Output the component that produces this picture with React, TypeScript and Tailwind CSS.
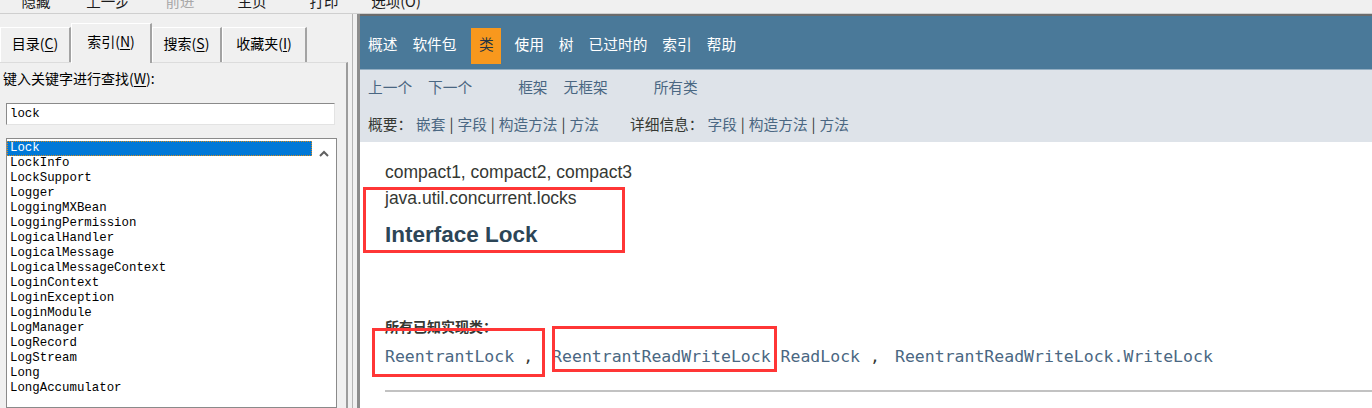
import React from 'react'

const toolbar = [
  { label: '隐藏', dim: false },
  { label: '上一步', dim: false },
  { label: '前进', dim: true },
  { label: '主页', dim: false },
  { label: '打印', dim: false },
  { label: '选项(O)', dim: false },
]

const entries = [
  'Lock',
  'LockInfo',
  'LockSupport',
  'Logger',
  'LoggingMXBean',
  'LoggingPermission',
  'LogicalHandler',
  'LogicalMessage',
  'LogicalMessageContext',
  'LoginContext',
  'LoginException',
  'LoginModule',
  'LogManager',
  'LogRecord',
  'LogStream',
  'Long',
  'LongAccumulator',
]

// offsets picked off the screenshot, the javadoc nav is not evenly spaced
const navItems = [
  { label: '概述', cls: 'ml-[1px]' },
  { label: '软件包', cls: 'ml-[1px]' },
  { label: '类', cls: 'ml-[8px]', active: true },
  { label: '使用', cls: 'ml-[6px]' },
  { label: '树', cls: 'ml-[1px]' },
  { label: '已过时的', cls: 'ml-[1px]' },
  { label: '索引', cls: 'ml-[1px]' },
  { label: '帮助', cls: 'ml-[1px]' },
]

const ui = "font-['Noto_Sans_CJK_SC',sans-serif]"

function Tab({ label, hot, active, cls }: { label: string; hot: string; active?: boolean; cls: string }) {
  const [before, after] = label.split('(')
  return (
    <div
      className={`${cls} flex justify-center border-l border-t border-r-2 border-l-[#ffffff] border-t-[#ffffff] border-r-[#a3a3a3] ${
        active ? 'h-[40px] -mb-[1px] bg-[#f0f0f0] pt-[7px] relative z-10' : 'h-[35px] pt-[5px]'
      }`}
    >
      <span className="text-[14px] leading-[20px] text-black">
        {before}(<span className="underline underline-offset-2">{hot}</span>
        {after.slice(1)}
      </span>
    </div>
  )
}

export default function App() {
  return (
    <div className={`w-[1372px] h-[408px] overflow-hidden bg-[#f0f0f0] flex flex-col ${ui}`}>
      {/* help viewer toolbar, only the lower half of the labels shows */}
      <div className="h-[14px] shrink-0 border-b border-[#cfcfcf] flex overflow-hidden">
        {toolbar.map((t) => (
          <div
            key={t.label}
            className={`w-[72px] -mt-[6px] text-center text-[14.5px] leading-[14px] ${t.dim ? 'text-[#a8a8a8]' : 'text-[#1a1a1a]'}`}
          >
            {t.label}
          </div>
        ))}
      </div>

      <div className="flex flex-1 min-h-0">
        {/* left pane */}
        <div className="w-[348px] shrink-0 flex flex-col">
          <div className="h-[48px] shrink-0 flex items-end">
            <Tab label="目录(C)" hot="C" cls="w-[71px]" />
            <Tab label="索引(N)" hot="N" cls="w-[81px]" active />
            <Tab label="搜索(S)" hot="S" cls="w-[70px]" />
            <Tab label="收藏夹(I)" hot="I" cls="w-[85px]" />
          </div>
          <div className="flex-1 min-h-0 border-t border-r-2 border-t-[#dcdcdc] border-r-[#9c9c9c] pl-[6px] flex flex-col">
            <div className="mt-[7px] -ml-[3px] text-[14px] leading-[16px] text-black">
              键入关键字进行查找(<span className="underline underline-offset-2">W</span>):
            </div>
            <div className="mt-[17px] w-[329px] h-[22px] shrink-0 bg-white border border-[#8a8a8a] border-b-[#e3e3e3] border-r-[#e3e3e3] pl-[3px] font-['Liberation_Mono',monospace] text-[12.4px] leading-[20px] text-black">
              lock
            </div>
            <div className="mt-[13px] w-[331px] flex-1 min-h-0 bg-white border border-[#8a8a8a] flex overflow-hidden">
              <div className="flex-1 pt-[2px] font-['Liberation_Mono',monospace] text-[12.4px] leading-[15px] text-black">
                {entries.map((e, i) => (
                  <div
                    key={e}
                    className={`h-[15px] pl-[3px] ${i === 0 ? 'bg-[#0078d7] text-white outline-1 outline-dotted outline-[#d48a1a] -outline-offset-1' : ''}`}
                  >
                    {e}
                  </div>
                ))}
              </div>
              <div className="w-[24px] shrink-0 flex justify-center pt-[8px]">
                <svg width="14" height="14" viewBox="0 0 14 14">
                  <polyline points="3,9 7,5 11,9" fill="none" stroke="#606060" strokeWidth="2" />
                </svg>
              </div>
            </div>
          </div>
        </div>

        {/* splitter */}
        <div className="w-[4px] shrink-0" />
        <div className="w-[1px] shrink-0 bg-[#b4b4b4]" />
        <div className="w-[4px] shrink-0" />
        <div className="w-[3px] shrink-0 bg-[#8c8c8c]" />

        {/* javadoc page */}
        <div className="flex-1 min-w-0 flex flex-col border-t-2 border-[#6b6b6b] bg-white">
          <div className="h-[54px] shrink-0 bg-[#4a7999] border-b border-[#93aec2] pt-[12px] flex items-start">
            {navItems.map((n) => (
              <div
                key={n.label}
                className={`${n.cls} h-[36px] pb-[3px] flex items-center justify-center text-[14.7px] ${
                  n.active ? 'w-[30px] bg-[#f8981d] text-[#253441]' : 'px-[7px] text-white'
                }`}
              >
                {n.label}
              </div>
            ))}
          </div>

          <div className="h-[72px] shrink-0 bg-[#dee3e9] pl-[8px] pt-[8px] text-[14.7px] leading-[18px] text-[#4a6782]">
            <div className="flex h-[18px]">
              <span>上一个</span>
              <span className="ml-[16px]">下一个</span>
              <span className="ml-[46px]">框架</span>
              <span className="ml-[16px]">无框架</span>
              <span className="ml-[46px]">所有类</span>
            </div>
            <div className="flex h-[18px] mt-[19px]">
              <div className="w-[262px] flex">
                <span className="text-[#353833]">概要：</span>
                <span className="ml-[4px]">嵌套</span>
                <span className="mx-[4px] text-[#353833]">|</span>
                <span>字段</span>
                <span className="mx-[4px] text-[#353833]">|</span>
                <span>构造方法</span>
                <span className="mx-[4px] text-[#353833]">|</span>
                <span>方法</span>
              </div>
              <div className="flex">
                <span className="text-[#353833]">详细信息：</span>
                <span className="ml-[4px]">字段</span>
                <span className="mx-[4px] text-[#353833]">|</span>
                <span>构造方法</span>
                <span className="mx-[4px] text-[#353833]">|</span>
                <span>方法</span>
              </div>
            </div>
          </div>

          <div className="relative flex-1 min-h-0 pl-[25px] pt-[17px]">
            <div className="font-['Liberation_Sans',sans-serif] text-[17.5px] leading-[26px] text-[#353833]">
              compact1, compact2, compact3
            </div>
            <div className="font-['Liberation_Sans',sans-serif] text-[17.5px] leading-[26px] text-[#353833]">
              java.util.concurrent.locks
            </div>
            <div className="mt-[9px] font-['Liberation_Sans',sans-serif] font-bold text-[22.5px] leading-[30px] text-[#2c4557]">
              Interface Lock
            </div>
            <div className="mt-[67px] text-[14px] leading-[18px] font-bold text-[#353833]">所有已知实现类：</div>
            <div className="mt-[11px] h-[22px] flex whitespace-nowrap font-['DejaVu_Sans_Mono',monospace] text-[16.5px] leading-[22px] text-[#4a6782]">
              <span>ReentrantLock</span>
              <span className="ml-[9px] mr-[19px] text-[#353833]">,</span>
              <span>ReentrantReadWriteLock.ReadLock</span>
              <span className="ml-[10px] mr-[15px] text-[#353833]">,</span>
              <span>ReentrantReadWriteLock.WriteLock</span>
            </div>
            <div className="mt-[22px] h-[2px] bg-[#c2c2c2]" />

            {/* red annotation boxes */}
            <div className="absolute left-[3px] top-[45px] w-[262px] h-[66px] border-[3px] border-[#ff3636]" />
            <div className="absolute left-[12px] top-[186px] w-[173px] h-[49px] border-[3px] border-[#ff3636]" />
            <div className="absolute left-[192px] top-[184px] w-[225px] h-[46px] border-[3px] border-[#ff3636]" />
          </div>
        </div>
      </div>
    </div>
  )
}
